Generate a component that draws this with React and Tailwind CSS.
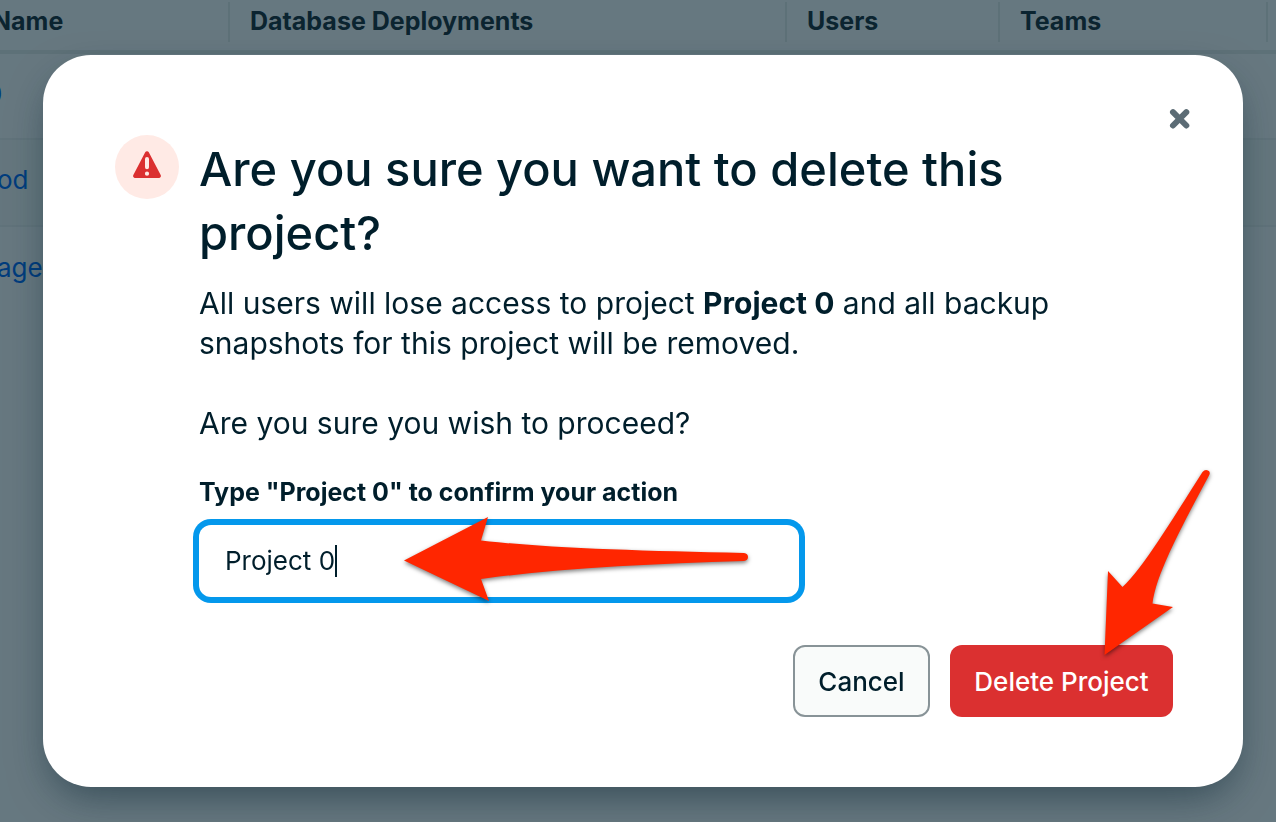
import { useState } from "react";

const projects = [
  { name: "0", pad: "pl-[2px]", row: "" },
  { name: "od", pad: "pl-[13px]", row: "bg-[#f9fbfa]" },
  { name: "age", pad: "pl-[13px]", row: "" },
];

const columns = [
  { title: "Database Deployments", width: "w-[557px]" },
  { title: "Users", width: "w-[213px]" },
  { title: "Teams", width: "w-[268px]" },
];

function ProjectsTable() {
  return (
    <div className="overflow-hidden">
      <table className="-ml-4 w-[calc(100%+16px)] table-fixed border-collapse text-left">
        <thead>
          <tr className="h-[52px] border-b-4 border-[#e8edeb] text-[25px] font-bold text-[#1c2d38]">
            <th className="w-[246px] p-0 pb-[6px]">
              <div className="flex h-10 items-center border-r-2 border-[#e8edeb] pl-2">Name</div>
            </th>
            {columns.map((c) => (
              <th key={c.title} className={`${c.width} p-0 pb-[6px]`}>
                <div className="flex h-10 items-center border-r-2 border-[#e8edeb] pl-5">
                  {c.title}
                </div>
              </th>
            ))}
            <th className="p-0" aria-label="Actions" />
          </tr>
        </thead>
        <tbody>
          {projects.map((p) => (
            <tr key={p.name} className={`h-[87px] text-[26px] ${p.row}`}>
              <td className={`border-t-2 border-[#f0f3f2] p-0 pb-[6px] ${p.pad}`}>
                <a href="#project" className="text-[#016bf8]">{p.name}</a>
              </td>
              <td className="border-t-2 border-[#f0f3f2]" colSpan={4} />
            </tr>
          ))}
        </tbody>
      </table>
    </div>
  );
}

function WarningBadge() {
  return (
    <span className="flex size-16 shrink-0 items-center justify-center rounded-full bg-[#ffeae5]">
      <svg viewBox="0 0 32 32" className="size-8" aria-hidden="true">
        <path
          fill="#db3030"
          fillRule="evenodd"
          d="M14.2 1.3a2 2 0 0 1 3.6 0L29.8 24.3a2 2 0 0 1-1.8 2.7H4a2 2 0 0 1-1.8-2.7ZM16 6a2 2 0 0 0-2 2v8.300a2 2 0 0 0 4 0V8a2 2 0 0 0-2-2Zm0 14.600a2.100 2.100 0 1 0 0 4.200 2.100 2.100 0 0 0 0-4.200Z"
        />
      </svg>
    </span>
  );
}

function FieldArrow() {
  return (
    <svg
      viewBox="396 510 360 100"
      className="pointer-events-none absolute -top-[15px] left-[197px] h-[100px] w-[360px] drop-shadow-[0_2px_2px_rgba(0,0,0,0.5)]"
      aria-hidden="true"
    >
      <path
        fill="#ff2600"
        d="M404 560.500 488 517 481 540.500C545 548 640 551 744 553Q748 553.500 748 557T744 561C650 564 560 568 481 579L489 601Z"
      />
    </svg>
  );
}

function ButtonArrow() {
  return (
    <svg
      viewBox="1096 462 120 200"
      className="pointer-events-none absolute right-[-43px] bottom-[55px] h-[200px] w-[120px] drop-shadow-[0_2px_2px_rgba(0,0,0,0.5)]"
      aria-hidden="true"
    >
      <path
        fill="#ff2600"
        d="M1104.500 655 1108 571 1122.500 587C1143 568 1170 523 1202.500 472Q1205 469 1208 470.500T1209 475.500C1176 537 1156 576 1152.500 603.500L1173 607Z"
      />
    </svg>
  );
}

export default function App() {
  const [value, setValue] = useState("Project 0");
  return (
    <div className="min-h-screen bg-white font-['Inter',sans-serif] text-[#001e2b]">
      <ProjectsTable />
      <div className="fixed inset-0 overflow-hidden bg-[#001e2b]/60 pt-[55px] pr-[33px] pl-[43px]">
        <div
          role="dialog"
          aria-modal="true"
          aria-labelledby="dialog-title"
          className="relative rounded-[48px] bg-white px-[70px] pt-20 pb-[70px] shadow-[0_16px_40px_-8px_rgba(0,30,43,0.5)]"
        >
          <button
            type="button"
            aria-label="Close"
            className="absolute top-12 right-12 flex size-8 items-center justify-center"
          >
            <svg viewBox="0 0 32 32" className="size-8" aria-hidden="true">
              <path d="M10 9.200 23.300 22.500M23.300 9.200 10 22.500" stroke="#5c6c75" strokeWidth="6" strokeLinecap="round" />
            </svg>
          </button>
          <div className="flex gap-5 pl-[2px]">
            <WarningBadge />
            <div className="min-w-0 flex-1">
              <h1 id="dialog-title" className="max-w-[900px] pt-[2px] text-[47px] leading-[64px] font-medium">
                Are you sure you want to delete this project?
              </h1>
              <div className="mt-[18px] max-w-[900px] text-[30px] leading-10">
                <p>
                  All users will lose access to project <b className="font-bold">Project 0</b> and all
                  backup snapshots for this project will be removed.
                </p>
                <p className="mt-10">Are you sure you wish to proceed?</p>
              </div>
              <label
                htmlFor="confirm"
                className="mt-[29px] block text-[25px] leading-10 font-bold"
              >
                Type "Project 0" to confirm your action
              </label>
              <div className="relative mt-[13px] flex h-[72px] max-w-[600px] items-center rounded-xl bg-white px-[26px] ring-6 ring-[#0498ec]">
                <input
                  id="confirm"
                  type="text"
                  value={value}
                  onChange={(e) => setValue(e.target.value)}
                  className="field-sizing-content bg-transparent text-[26px] leading-10 caret-transparent outline-none"
                />
                <span className="h-8 w-[2px] bg-[#001e2b]" aria-hidden="true" />
                <FieldArrow />
              </div>
            </div>
          </div>
          <div className="mt-12 flex justify-end gap-5">
            <button
              type="button"
              className="h-[72px] w-[137px] rounded-xl border-2 border-[#889397] bg-[#f9fbfa] text-[26px] font-medium"
            >
              Cancel
            </button>
            <div className="relative">
              <button
                type="button"
                className="h-[72px] w-[223px] rounded-xl bg-[#db3030] text-[26px] font-medium text-white"
              >
                Delete Project
              </button>
              <ButtonArrow />
            </div>
          </div>
        </div>
      </div>
    </div>
  );
}
